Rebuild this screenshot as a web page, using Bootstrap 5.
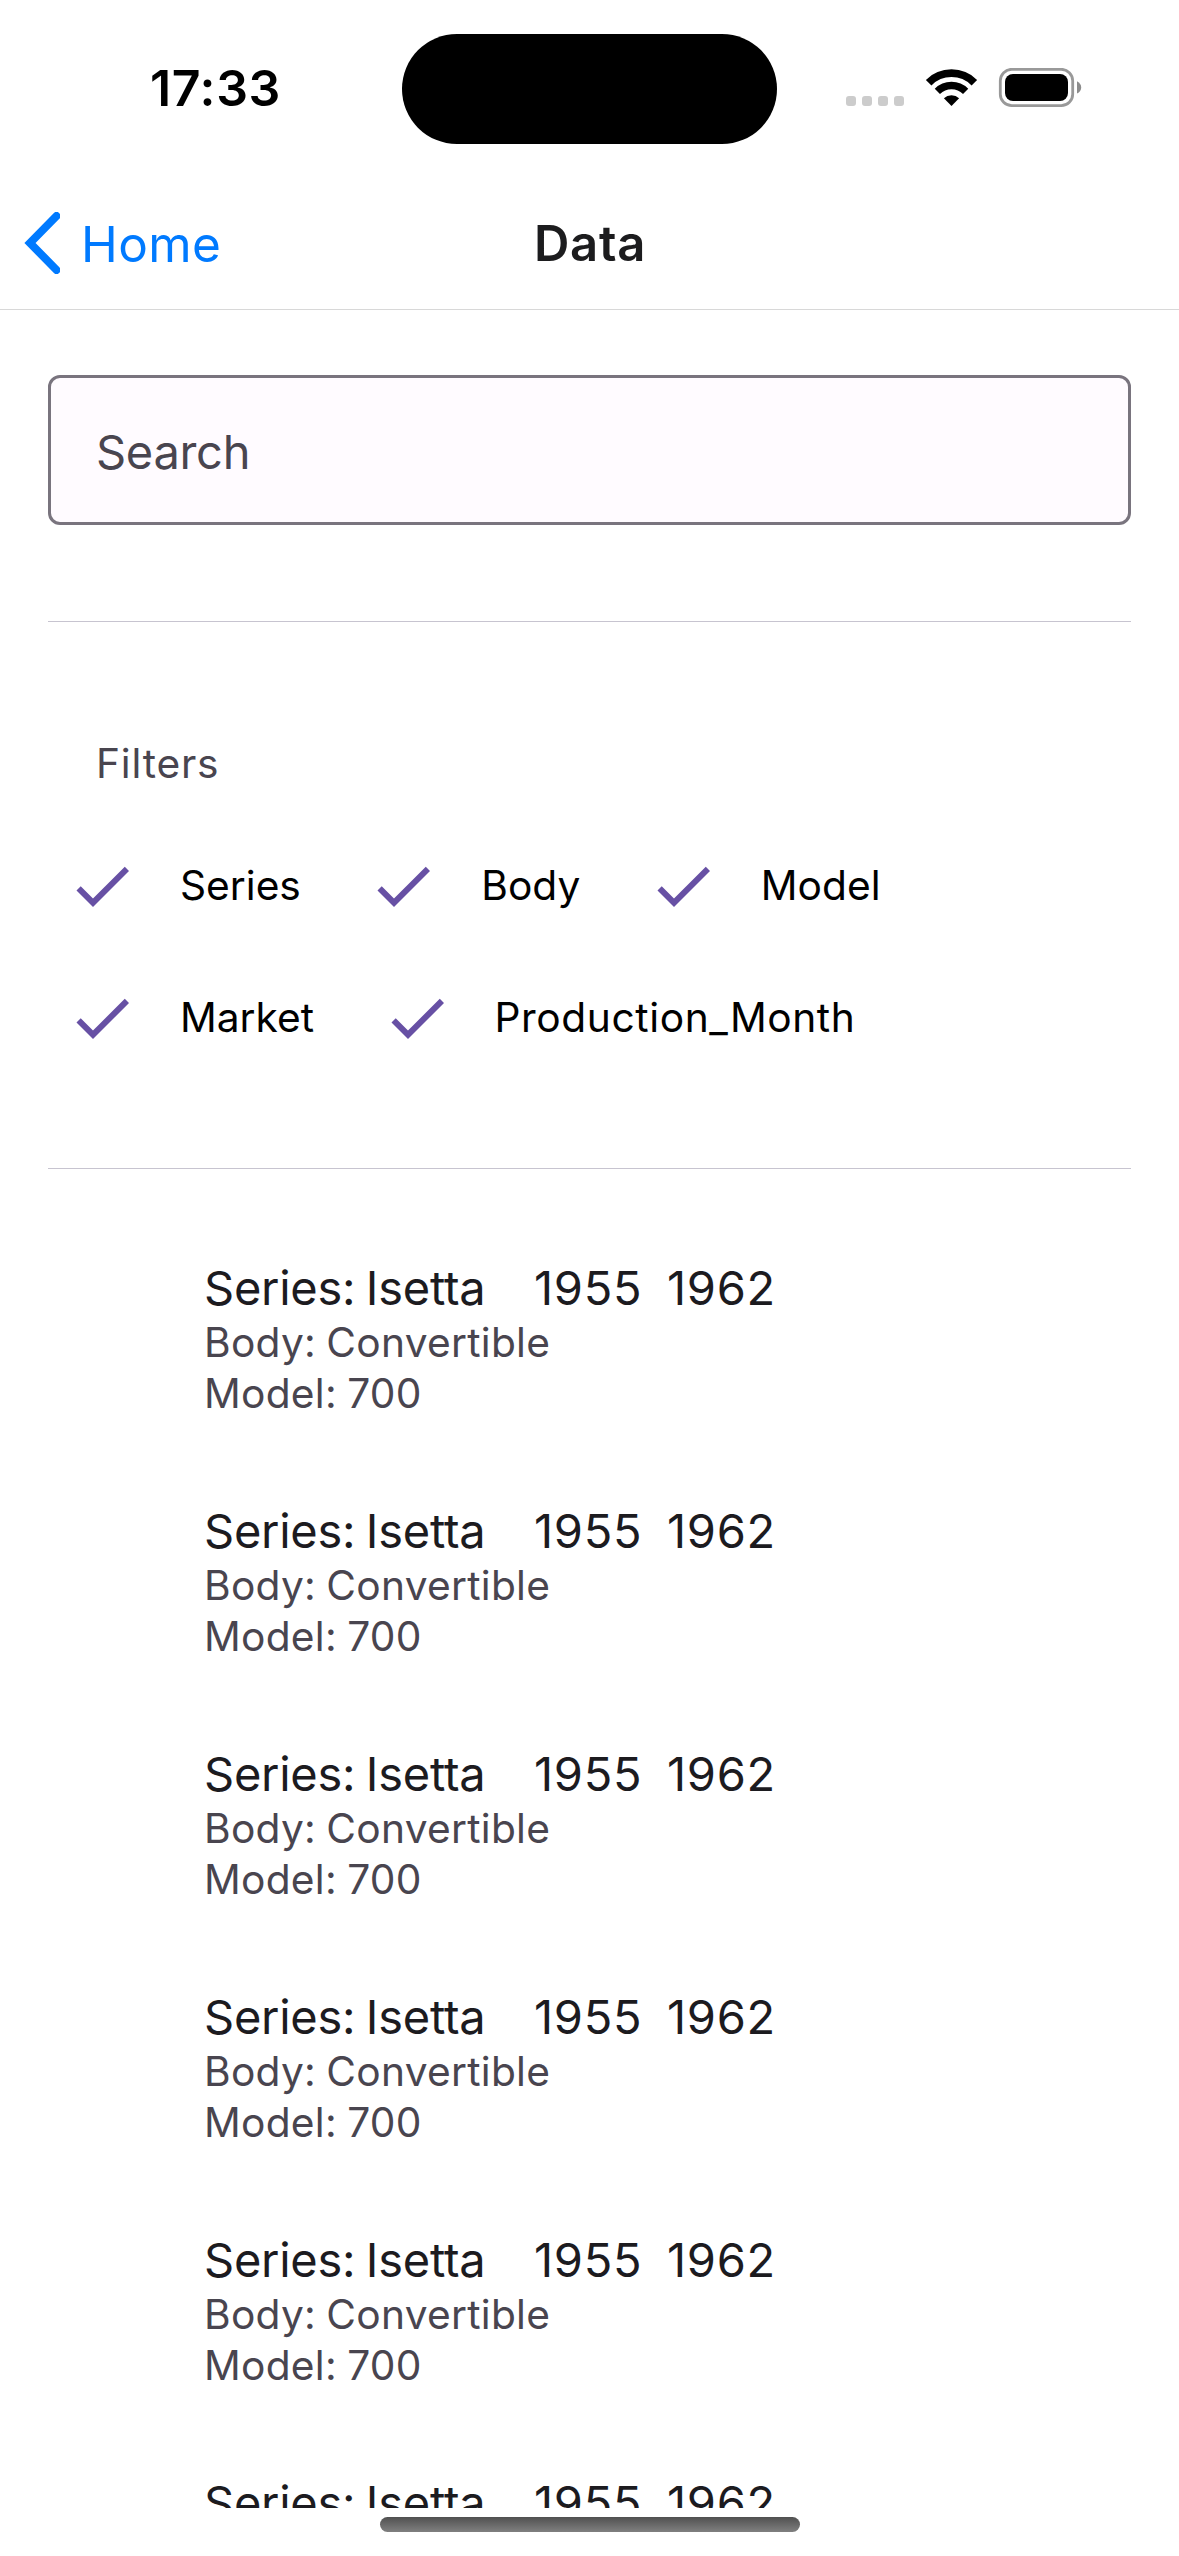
<!DOCTYPE html>
<html lang="en" data-bs-theme="light">
<head>
<meta charset="utf-8">
<meta name="viewport" content="width=device-width, initial-scale=1">
<title>Data</title>
<link href="https://cdn.jsdelivr.net/npm/bootstrap@5.3.0/dist/css/bootstrap.min.css" rel="stylesheet">
<style>
  body { font-family: Inter, "Liberation Sans", sans-serif; background: #fff; color: #000; font-size: 40.7px; }
  .screen { width: 1179px; height: 2556px; }
  .status-bar { height: 177px; }
  .clock-side { width: 402px; padding: 0 0 2px 150px; font-size: 50px; font-weight: 600; letter-spacing: .64px; line-height: 60px; }
  .island { width: 375px; height: 110px; border-radius: 55px; background: #000; }
  .status-icons { padding: 0 0 2px 69px; }
  .nav-head { height: 133px; border-bottom: 1px solid #d8d8d8; }
  .back-link { width: 534px; color: #007aff; font-size: 49.5px; letter-spacing: .39px; line-height: 60px; padding-left: 24px; }
  .back-link svg { margin-right: 21px; }
  .back-label { padding-top: 2px; }
  .nav-heading { padding-top: 1px; font-size: 49px; font-weight: 600; letter-spacing: .7px; line-height: 60px; color: #1c1c1e; }
  .scroll-area { height: 2198px; padding: 65px 48px 0; }
  .search-input, .search-input:focus { height: 150px; border: 3px solid #79747e; border-radius: 12px; background: #fffbff; padding: 3px 45px 0; font-size: 47px; letter-spacing: -.3px; color: #49454f; box-shadow: none; }
  .search-input::placeholder { color: #49454f; opacity: 1; }
  .rule { height: 1px; background: #c7c4d0; }
  .rule-top { margin-top: 96px; }
  .filters-title { color: #49454f; letter-spacing: .79px; line-height: 60px; padding: 112px 0 0 48px; }
  .filter-rows { padding: 26px 0 84px 18px; }
  .filter-line { height: 132px; column-gap: 66.5px; }
  .filter-item { gap: 42px; line-height: 60px; }
  .filter-item svg { width: 72px; height: 72px; fill: #6750a4; }
  .long-label { letter-spacing: .6px; }
  .results { padding: 90px 0 0 156px; }
  .result { margin-bottom: 83px; color: #49454f; line-height: 51px; }
  .result-title { color: #1c1b1f; font-size: 47px; line-height: 57px; letter-spacing: .75px; margin-bottom: 1px; }
  .series-name { letter-spacing: -.25px; word-spacing: -2.5px; width: 330px; }
  .year-from { margin-right: 24.5px; }
  .result-body { letter-spacing: .27px; word-spacing: -1.5px; }
  .home-bar { width: 420px; height: 15px; margin-top: 9px; border-radius: 8px; background: linear-gradient(#505050, #808080); }
</style>
</head>
<body>
<svg class="d-none" aria-hidden="true">
  <symbol id="check" viewBox="0 0 24 24"><path d="M21 7 9 19l-5.5-5.5 1.41-1.41L9 16.17 19.59 5.59z"/></symbol>
</svg>
<div class="screen d-flex flex-column overflow-hidden">
  <header>
    <div class="status-bar d-flex align-items-center">
      <div class="clock-side flex-shrink-0">17:33</div>
      <div class="island flex-shrink-0"></div>
      <div class="status-icons d-flex">
        <svg width="240" height="40" viewBox="846 68 240 40">
          <g fill="#ccc">
            <rect x="846" y="96" width="10" height="10" rx="3"/>
            <rect x="862" y="96" width="10" height="10" rx="3"/>
            <rect x="878" y="96" width="10" height="10" rx="3"/>
            <rect x="894" y="96" width="10" height="10" rx="3"/>
          </g>
          <g transform="translate(926 69)" fill="none" stroke="#000">
            <path d="M2.66 13.66A32.3 32.3 0 0 1 48.34 13.66" stroke-width="7.8"/>
            <path d="M11.36 22.36A20 20 0 0 1 39.64 22.36" stroke-width="7.4"/>
            <path d="M25.5 37 17.9 29.2A11 11 0 0 1 33.1 29.2Z" fill="#000" stroke="none"/>
          </g>
          <rect x="1000.3" y="69.3" width="72.4" height="36.4" rx="11.5" fill="none" stroke="#999" stroke-width="2.8"/>
          <rect x="1005" y="74" width="63" height="27" rx="8"/>
          <path d="M1077 81.3Q1081.2 83.5 1081.2 87.4T1077 93.5Z" fill="#8c8c8c"/>
        </svg>
      </div>
    </div>
    <nav class="nav-head d-flex align-items-center">
      <a class="back-link flex-shrink-0 d-flex align-items-center text-decoration-none" href="#">
        <svg width="36" height="62" viewBox="0 0 36 62" fill="none" stroke="#007aff" stroke-width="8" stroke-linecap="round"><path d="M32.5 4 6 31 32.5 58"/></svg>
        <span class="back-label">Home</span>
      </a>
      <div class="nav-heading">Data</div>
    </nav>
  </header>
  <main class="scroll-area overflow-hidden flex-shrink-0">
    <input class="form-control search-input" type="text" placeholder="Search" aria-label="Search">
    <div class="rule rule-top"></div>
    <section>
      <div class="filters-title">Filters</div>
      <div class="filter-rows">
        <div class="filter-line d-flex align-items-center">
          <div class="filter-item d-flex align-items-center"><svg><use href="#check"/></svg><span>Series</span></div>
          <div class="filter-item d-flex align-items-center"><svg><use href="#check"/></svg><span>Body</span></div>
          <div class="filter-item d-flex align-items-center"><svg><use href="#check"/></svg><span>Model</span></div>
        </div>
        <div class="filter-line d-flex align-items-center">
          <div class="filter-item d-flex align-items-center"><svg><use href="#check"/></svg><span>Market</span></div>
          <div class="filter-item d-flex align-items-center"><svg><use href="#check"/></svg><span class="long-label">Production_Month</span></div>
        </div>
      </div>
    </section>
    <div class="rule"></div>
    <section class="results">
      <div class="result"><div class="result-title d-flex"><span class="series-name">Series: Isetta</span><span class="year-from">1955</span><span>1962</span></div><div class="result-body">Body: Convertible</div><div class="result-body">Model: 700</div></div>
      <div class="result"><div class="result-title d-flex"><span class="series-name">Series: Isetta</span><span class="year-from">1955</span><span>1962</span></div><div class="result-body">Body: Convertible</div><div class="result-body">Model: 700</div></div>
      <div class="result"><div class="result-title d-flex"><span class="series-name">Series: Isetta</span><span class="year-from">1955</span><span>1962</span></div><div class="result-body">Body: Convertible</div><div class="result-body">Model: 700</div></div>
      <div class="result"><div class="result-title d-flex"><span class="series-name">Series: Isetta</span><span class="year-from">1955</span><span>1962</span></div><div class="result-body">Body: Convertible</div><div class="result-body">Model: 700</div></div>
      <div class="result"><div class="result-title d-flex"><span class="series-name">Series: Isetta</span><span class="year-from">1955</span><span>1962</span></div><div class="result-body">Body: Convertible</div><div class="result-body">Model: 700</div></div>
      <div class="result"><div class="result-title d-flex"><span class="series-name">Series: Isetta</span><span class="year-from">1955</span><span>1962</span></div></div>
    </section>
  </main>
  <div class="home-bar mx-auto"></div>
</div>
<script src="https://cdn.jsdelivr.net/npm/bootstrap@5.3.0/dist/js/bootstrap.bundle.min.js"></script>
</body>
</html>
